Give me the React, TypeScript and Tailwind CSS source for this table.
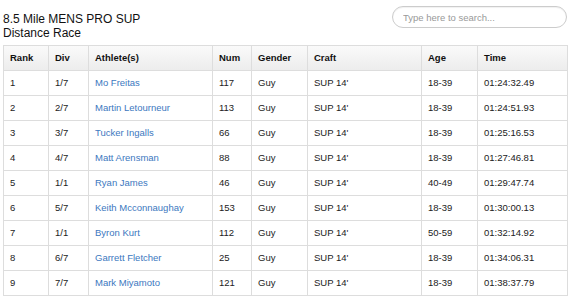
import React from 'react';

const rows = [
  { rank: '1', div: '1/7', name: 'Mo Freitas', num: '117', gender: 'Guy', craft: "SUP 14'", age: '18-39', time: '01:24:32.49' },
  { rank: '2', div: '2/7', name: 'Martin Letourneur', num: '113', gender: 'Guy', craft: "SUP 14'", age: '18-39', time: '01:24:51.93' },
  { rank: '3', div: '3/7', name: 'Tucker Ingalls', num: '66', gender: 'Guy', craft: "SUP 14'", age: '18-39', time: '01:25:16.53' },
  { rank: '4', div: '4/7', name: 'Matt Arensman', num: '88', gender: 'Guy', craft: "SUP 14'", age: '18-39', time: '01:27:46.81' },
  { rank: '5', div: '1/1', name: 'Ryan James', num: '46', gender: 'Guy', craft: "SUP 14'", age: '40-49', time: '01:29:47.74' },
  { rank: '6', div: '5/7', name: 'Keith Mcconnaughay', num: '153', gender: 'Guy', craft: "SUP 14'", age: '18-39', time: '01:30:00.13' },
  { rank: '7', div: '1/1', name: 'Byron Kurt', num: '112', gender: 'Guy', craft: "SUP 14'", age: '50-59', time: '01:32:14.92' },
  { rank: '8', div: '6/7', name: 'Garrett Fletcher', num: '25', gender: 'Guy', craft: "SUP 14'", age: '18-39', time: '01:34:06.31' },
  { rank: '9', div: '7/7', name: 'Mark Miyamoto', num: '121', gender: 'Guy', craft: "SUP 14'", age: '18-39', time: '01:38:37.79' },
];

const headers = ['Rank', 'Div', 'Athlete(s)', 'Num', 'Gender', 'Craft', 'Age', 'Time'];
const widths = [45, 40, 124, 39, 56, 114, 56, 90];

const App: React.FC = () => {
  return (
    <div className="w-[575px] h-[307px] bg-white pl-[3px] pr-[8px] pt-[6px] font-['Liberation_Sans',Arial,sans-serif] text-[#222]">
      {/* Title + search */}
      <div className="h-[39px] flex justify-between items-start">
        <h1 className="pt-[6px] text-[12px] leading-[14px] text-[#111]">
          8.5 Mile MENS PRO SUP
          <br />
          Distance Race
        </h1>
        <input
          type="text"
          placeholder="Type here to search..."
          className="w-[175px] h-[22px] rounded-full border border-[#ccc] px-[10px] text-[9.5px] placeholder:text-[#999] outline-none shadow-[inset_0_1px_1px_rgba(0,0,0,0.06)]"
        />
      </div>

      {/* Results table */}
      <table className="w-[564px] table-fixed border-collapse border border-[#ddd] text-[9.5px]">
        <colgroup>
          {widths.map((w, i) => (
            <col key={i} style={{ width: w }} />
          ))}
        </colgroup>
        <thead>
          <tr className="h-[25px] bg-gradient-to-b from-[#fafafa] to-[#ececec]">
            {headers.map((h) => (
              <th key={h} className="border border-[#ddd] px-[6px] text-left font-bold text-[#111]">
                {h}
              </th>
            ))}
          </tr>
        </thead>
        <tbody>
          {rows.map((r) => (
            <tr key={r.rank} className="h-[25px]">
              <td className="border border-[#ddd] px-[6px]">{r.rank}</td>
              <td className="border border-[#ddd] px-[6px]">{r.div}</td>
              <td className="border border-[#ddd] px-[6px]">
                <a href="#" className="text-[#3c78c0]">{r.name}</a>
              </td>
              <td className="border border-[#ddd] px-[6px]">{r.num}</td>
              <td className="border border-[#ddd] px-[6px]">{r.gender}</td>
              <td className="border border-[#ddd] px-[6px]">{r.craft}</td>
              <td className="border border-[#ddd] px-[6px]">{r.age}</td>
              <td className="border border-[#ddd] px-[6px]">{r.time}</td>
            </tr>
          ))}
        </tbody>
      </table>
    </div>
  );
};

export default App;
